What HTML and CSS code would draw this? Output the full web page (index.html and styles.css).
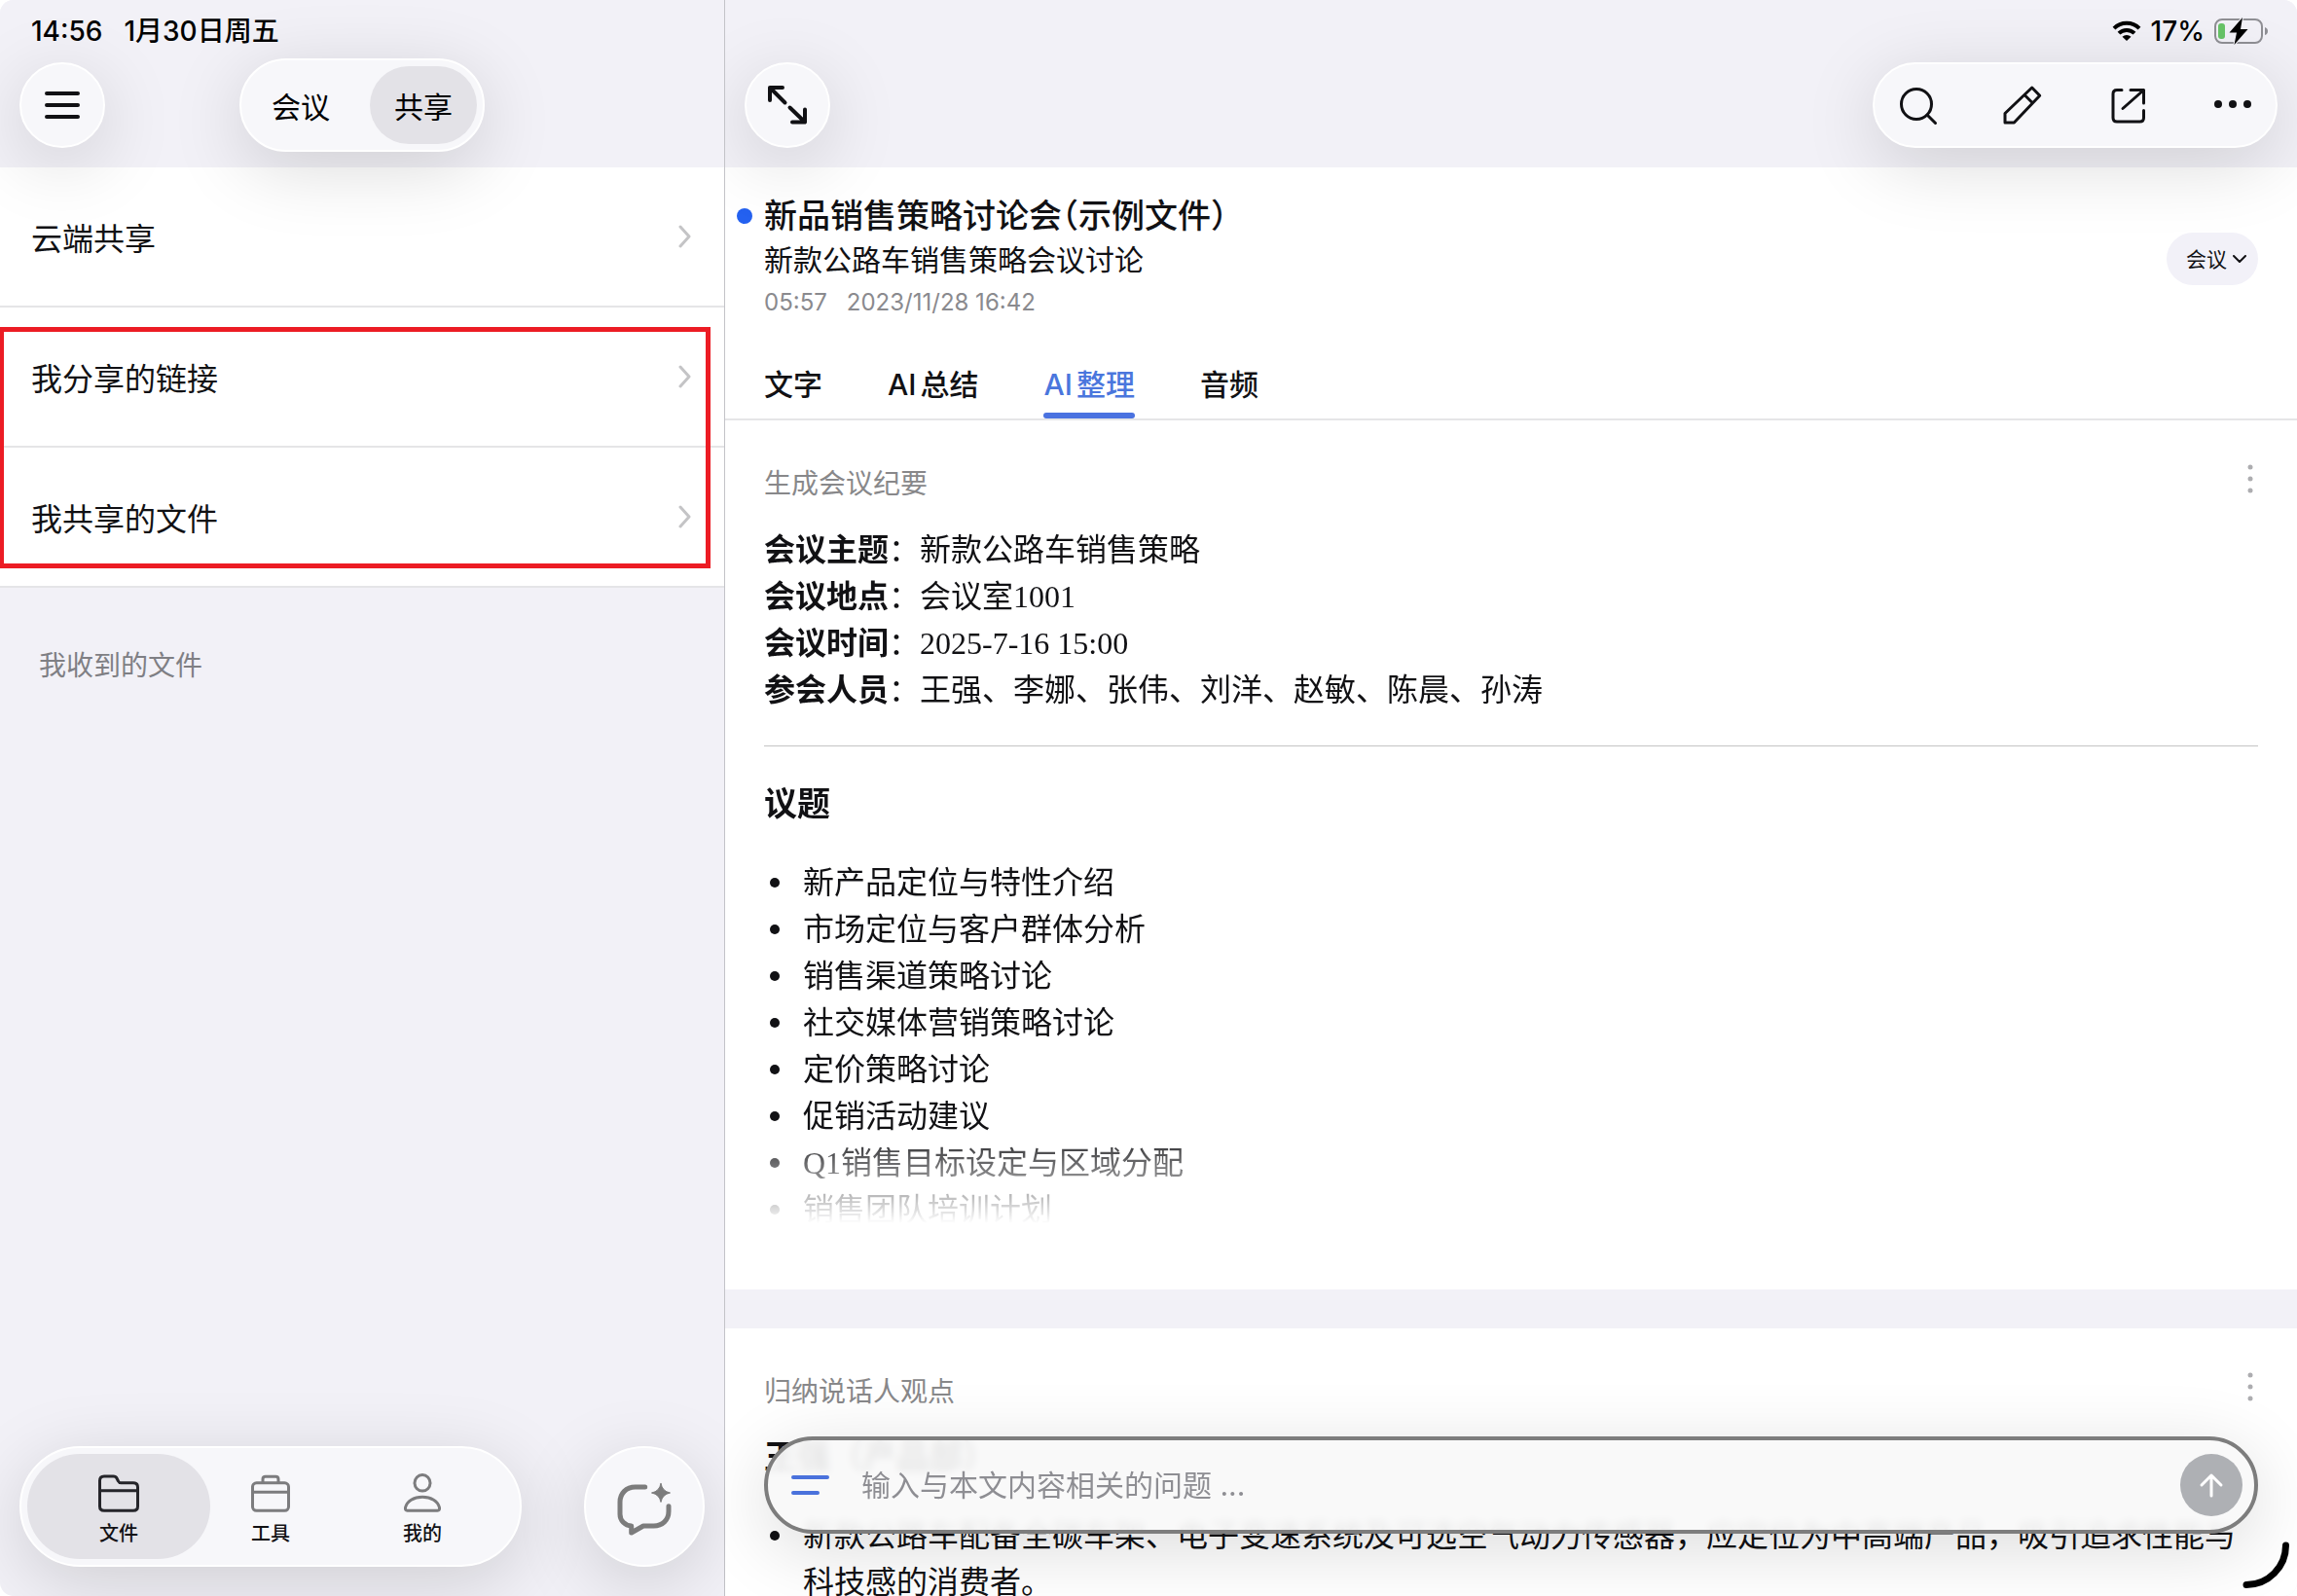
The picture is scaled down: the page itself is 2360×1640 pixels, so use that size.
FILE: index.html
```html
<!DOCTYPE html>
<html lang="zh-CN">
<head>
<meta charset="UTF-8">
<meta name="viewport" content="width=device-width, initial-scale=1.0">
<title>共享 - 新品销售策略讨论会</title>
<link rel="stylesheet" href="styles.css">
</head>
<body>
<div class="app">

  <!-- 左侧栏 -->
  <aside class="sidebar">
    <header class="topbar">
      <div class="status">
        <span>14:56</span>
        <span>1月30日周五</span>
      </div>
      <div class="topbar-row topbar-row-center">
        <button class="round-btn" aria-label="菜单">
          <svg class="icon" viewBox="0 0 44 44" stroke-width="4"><path d="M6 10h32M6 22h32M6 34h32"/></svg>
        </button>
        <div class="segmented glass">
          <button class="segment">会议</button>
          <button class="segment active">共享</button>
        </div>
      </div>
    </header>

    <nav class="share-list">
      <a class="share-row" href="#cloud">云端共享
        <svg class="chevron" viewBox="0 0 14 24"><path d="M2 2l9 10-9 10"/></svg>
      </a>
      <div class="share-group">
        <a class="share-row" href="#links">我分享的链接
          <svg class="chevron" viewBox="0 0 14 24"><path d="M2 2l9 10-9 10"/></svg>
        </a>
        <a class="share-row" href="#files">我共享的文件
          <svg class="chevron" viewBox="0 0 14 24"><path d="M2 2l9 10-9 10"/></svg>
        </a>
        <div class="highlight"></div>
      </div>
    </nav>

    <h2 class="received">我收到的文件</h2>

    <footer class="bottombar">
      <nav class="tabbar glass">
        <a class="tabbar-item active" href="#files">
          <svg class="tab-icon" viewBox="0 0 44 40"><path d="M2.500 34V7.500Q2.500 3 7 3h9.500q2.500 0 3.500 2l1.500 3q.8 1.800 3 1.800H37q4.500 0 4.500 4.500V34q0 4.300-4.500 4.300H7Q2.500 38.300 2.500 34zM2.500 17.700h39"/></svg>
          文件
        </a>
        <a class="tabbar-item" href="#tools">
          <svg class="tab-icon" viewBox="0 0 44 40"><rect x="3.500" y="9.800" width="37" height="28.500" rx="4"/><path d="M3.500 19.300h37M14 9.500V6q0-2.800 2.800-2.800h10.400Q30 3.200 30 6v3.500"/></svg>
          工具
        </a>
        <a class="tabbar-item" href="#mine">
          <svg class="tab-icon" viewBox="0 0 44 40"><ellipse cx="22" cy="9.800" rx="8" ry="8.300"/><path d="M6.500 38.200q-2.500 0-2-3C6 28.500 13 24.200 22 24.200s16 4.300 17.500 11q.5 3-2 3z"/></svg>
          我的
        </a>
      </nav>
      <button class="chat-btn glass" aria-label="AI 对话">
        <svg class="chat-icon" viewBox="0 0 64 64">
          <path d="M32.700 12H22.700C13.500 12 7 18.500 7 27.500V40c0 6.500 5 11.500 11.700 12v7l12.300-7h10.700C50.500 52 57 46 57 37v-5.300"/>
          <path class="star" d="M49 8.500q1.500 8 9.500 9.500-8 1.500-9.500 9.500-1.500-8-9.500-9.500 8-1.500 9.500-9.500z"/>
        </svg>
      </button>
    </footer>
  </aside>

  <!-- 右侧内容 -->
  <main class="main">
    <header class="topbar">
      <div class="status status-right">
        <svg class="wifi" viewBox="0 0 30 22">
          <path d="M2 8.200a18.500 18.500 0 0 1 26 0M7 13.200a11.400 11.400 0 0 1 16 0"/>
          <path class="solid" d="M15 21l4.500-4.300a6.500 6.500 0 0 0-9 0z"/>
        </svg>
        <span>17%</span>
        <svg class="battery" viewBox="0 0 56 28">
          <rect class="shell" x="1" y="2" width="48" height="24" rx="7"/>
          <rect class="level" x="4" y="6" width="7" height="16" rx="3"/>
          <path class="cap" d="M52 10q3 1 3 4t-3 4z"/>
          <path class="bolt" d="M29 0L15.500 15.500h7.500L20.500 28 34.500 12H27z"/>
        </svg>
      </div>
      <div class="topbar-row">
        <button class="round-btn" aria-label="全屏">
          <svg class="icon" viewBox="0 0 44 44" stroke-width="4"><path d="M17 4H4v13M4 4l15.500 15.500M27 39.500h13V26.500M40 39.500L24.500 24.500"/></svg>
        </button>
        <div class="toolbar glass">
          <button class="tool" aria-label="搜索">
            <svg class="icon" viewBox="0 0 44 44"><circle cx="21" cy="21" r="15.500"/><path d="M32 32l8.500 8.500"/></svg>
          </button>
          <button class="tool" aria-label="编辑">
            <svg class="icon" viewBox="0 0 44 44"><path d="M4 40v-9.500L31.700 4l8 8.300L13.300 40zM24 11.500l8 8"/></svg>
          </button>
          <button class="tool" aria-label="导出">
            <svg class="icon" viewBox="0 0 44 44"><path d="M16 6.500h-5q-4 0-4 4V35q0 4 4 4h23.500q4 0 4-4v-7.500M25 6.500h13.500V20M38.500 6.500L17 25.500"/></svg>
          </button>
          <button class="tool" aria-label="更多">
            <svg class="icon icon-dots" viewBox="0 0 44 44"><circle cx="7" cy="21" r="4"/><circle cx="22" cy="21" r="4"/><circle cx="37" cy="21" r="4"/></svg>
          </button>
        </div>
      </div>
    </header>

    <section class="doc-head">
      <div class="doc-info">
        <div class="doc-text">
          <h1 class="doc-title">新品销售策略讨论会（示例文件）</h1>
          <p class="doc-sub">新款公路车销售策略会议讨论</p>
          <p class="doc-meta"><span>05:57</span><span>2023/11/28 16:42</span></p>
        </div>
        <div class="type-picker">
          <select class="type-select" aria-label="类型">
            <option>会议</option>
          </select>
          <svg class="type-arrow" viewBox="0 0 14 8"><path d="M1 1l6 6 6-6"/></svg>
        </div>
      </div>
      <nav class="tabs">
        <a class="tab" href="#text">文字</a>
        <a class="tab" href="#summary"><span class="latin">AI</span>总结</a>
        <a class="tab active" href="#organize"><span class="latin">AI</span>整理</a>
        <a class="tab" href="#audio">音频</a>
      </nav>
    </section>

    <section class="card">
      <div class="card-head">
        <h2 class="card-title">生成会议纪要</h2>
        <button class="more" aria-label="更多操作">
          <svg class="more-icon" viewBox="0 0 16 32"><circle cx="8" cy="4" r="2.500"/><circle cx="8" cy="16" r="2.500"/><circle cx="8" cy="28" r="2.500"/></svg>
        </button>
      </div>
      <div class="article fade">
        <p><b>会议主题</b>：新款公路车销售策略</p>
        <p><b>会议地点</b>：会议室1001</p>
        <p><b>会议时间</b>：2025-7-16 15:00</p>
        <p><b>参会人员</b>：王强、李娜、张伟、刘洋、赵敏、陈晨、孙涛</p>
        <hr>
        <h3>议题</h3>
        <ul>
          <li>新产品定位与特性介绍</li>
          <li>市场定位与客户群体分析</li>
          <li>销售渠道策略讨论</li>
          <li>社交媒体营销策略讨论</li>
          <li>定价策略讨论</li>
          <li>促销活动建议</li>
          <li>Q1销售目标设定与区域分配</li>
          <li>销售团队培训计划</li>
        </ul>
      </div>
    </section>

    <section class="card">
      <div class="card-head">
        <h2 class="card-title">归纳说话人观点</h2>
        <button class="more" aria-label="更多操作">
          <svg class="more-icon" viewBox="0 0 16 32"><circle cx="8" cy="4" r="2.500"/><circle cx="8" cy="16" r="2.500"/><circle cx="8" cy="28" r="2.500"/></svg>
        </button>
      </div>
      <div class="article">
        <h3>王强（产品部）</h3>
        <ul>
          <li>新款公路车配备全碳车架、电子变速系统及可选空气动力传感器，应定位为中高端产品，吸引追求性能与科技感的消费者。</li>
        </ul>
      </div>
    </section>

    <!-- 悬浮提问框 -->
    <form class="ask">
      <svg class="ask-icon" viewBox="0 0 40 24"><path d="M2 4h35M2 20h25"/></svg>
      <input class="ask-input" type="text" placeholder="输入与本文内容相关的问题 ..." aria-label="提问">
      <button class="ask-send" type="button" aria-label="发送">
        <svg class="send-icon" viewBox="0 0 28 28"><path d="M14 25V4M4 14L14 4l10 10"/></svg>
      </button>
    </form>

    <svg class="corner" viewBox="0 0 48 48"><path d="M44.500 4A40.500 40.500 0 0 1 4 44.500"/></svg>
  </main>
</div>
</body>
</html>
```
FILE: styles.css
```css
* {
  box-sizing: border-box;
}
body {
  margin: 0;
  background: #fff;
  color: #111114;
  font-family: Inter, "Noto Sans CJK SC", sans-serif;
  font-size: 32px;
}
h1, h2, h3, p, ul {
  margin: 0;
}
a {
  color: inherit;
  text-decoration: none;
}
button, select, input {
  border: none;
  padding: 0;
  background: none;
  color: inherit;
  font-family: inherit;
}
svg {
  display: block;
  fill: none;
  stroke: currentColor;
  stroke-linecap: round;
  stroke-linejoin: round;
}

.app {
  display: grid;
  grid-template-columns: minmax(0, 745fr) minmax(0, 1615fr);
  height: 100vh;
  overflow: hidden;
  border-radius: 14px;
}
.glass, .round-btn {
  background: #f7f7fa;
  border: 2px solid #fff;
  box-shadow: 0 16px 76px rgba(0, 0, 0, 0.15);
}

/* 顶部栏 */
.topbar {
  position: relative;
  z-index: 1;
  background: #f2f1f7;
}
.status {
  display: flex;
  align-items: center;
  gap: 22px;
  height: 44px;
  padding: 20px 32px 0;
  color: #000;
  font-size: 28px;
  font-weight: 500;
  line-height: 24px;
}
.status-right {
  justify-content: flex-end;
  gap: 10px;
  padding-right: 29px;
}
.topbar-row {
  display: flex;
  align-items: center;
  justify-content: space-between;
  height: 128px;
  padding: 0 20px;
}
.topbar-row-center {
  display: grid;
  grid-template-columns: 1fr auto 1fr;
}
.round-btn {
  display: flex;
  align-items: center;
  justify-content: center;
  width: 88px;
  height: 88px;
  border-radius: 50%;
}
.icon {
  width: 44px;
  height: 44px;
  stroke-width: 3;
}
.round-btn .icon {
  stroke-width: 4;
}
.icon-dots {
  fill: currentColor;
  stroke: none;
}
.segmented {
  display: flex;
  gap: 16px;
  padding: 6px;
  border-radius: 48px;
}
.segment {
  width: 110px;
  height: 80px;
  border-radius: 40px;
  color: #000;
  font-size: 30px;
}
.segment.active {
  background: #e3e2e7;
}
.toolbar {
  display: flex;
  align-items: center;
  gap: 64px;
  height: 88px;
  padding: 0 22px;
  border-radius: 44px;
}
.wifi {
  width: 30px;
  height: 22px;
  color: #000;
  stroke-width: 4;
  stroke-linecap: butt;
}
.wifi .solid {
  fill: currentColor;
  stroke: none;
}
.battery {
  width: 56px;
  height: 28px;
}
.battery .shell {
  stroke: #8f8f94;
  stroke-width: 2;
}
.battery .level {
  fill: #67c467;
  stroke: none;
}
.battery .cap {
  fill: #8f8f94;
  stroke: none;
}
.battery .bolt {
  fill: #000;
  stroke: #f2f1f7;
  stroke-width: 2;
  paint-order: stroke;
}

/* 左侧栏 */
.sidebar {
  display: flex;
  flex-direction: column;
  border-right: 1px solid #c3c3c8;
  background: #f2f1f7;
}
.share-list {
  background: #fff;
}
.share-group {
  position: relative;
}
.share-row {
  display: flex;
  align-items: center;
  justify-content: space-between;
  height: 144px;
  padding: 0 33px 0 32px;
  border-bottom: 2px solid #e5e5e7;
}
.chevron {
  width: 14px;
  height: 24px;
  color: #c4c4c6;
  stroke-width: 3;
}
.highlight {
  position: absolute;
  inset: 20px 14px 20px 0;
  border: 5px solid #ec1c24;
  border-left-width: 4px;
  pointer-events: none;
}
.received {
  padding: 60px 40px;
  color: #7f7f84;
  font-size: 28px;
  font-weight: 400;
  line-height: 40px;
}
.bottombar {
  display: flex;
  align-items: center;
  justify-content: space-between;
  margin-top: auto;
  padding: 0 20px 30px;
}
.tabbar {
  display: flex;
  padding: 6px 22px;
  border-radius: 62px;
}
.tabbar-item {
  display: flex;
  flex-direction: column;
  align-items: center;
  gap: 8px;
  width: 156px;
  height: 108px;
  padding-top: 20px;
  border-radius: 54px;
  font-size: 20px;
  font-weight: 500;
  line-height: 28px;
}
.tabbar-item.active {
  width: 188px;
  margin: 0 -16px;
  background: #e3e2e7;
}
.tab-icon {
  width: 44px;
  height: 40px;
  color: #7c7c7e;
  stroke-width: 3;
}
.tabbar-item.active .tab-icon {
  color: #25252a;
}
.chat-btn {
  display: flex;
  align-items: center;
  justify-content: center;
  width: 124px;
  height: 124px;
  border-radius: 50%;
}
.chat-icon {
  width: 64px;
  height: 64px;
  color: #7c7c7c;
  stroke-width: 5;
}
.chat-icon .star {
  fill: currentColor;
  stroke-width: 1;
}

/* 文档标题 */
.main {
  position: relative;
  overflow: hidden;
  background: #f2f1f7;
}
.doc-head {
  padding: 26px 40px 0;
  border-bottom: 2px solid #e5e5e7;
  background: #fff;
}
.doc-info {
  display: flex;
  align-items: center;
  justify-content: space-between;
}
.doc-title {
  display: flex;
  align-items: center;
  gap: 12px;
  margin-left: -28px;
  font-size: 34px;
  font-weight: 500;
  line-height: 48px;
  font-feature-settings: "halt";
}
.doc-title::before {
  content: "";
  width: 16px;
  height: 16px;
  border-radius: 50%;
  background: #2461f0;
}
.doc-sub {
  font-size: 30px;
  line-height: 42px;
}
.doc-meta {
  display: flex;
  gap: 20px;
  color: #8a8a8e;
  font-size: 24px;
  line-height: 46px;
}
.type-picker {
  display: grid;
  align-items: center;
}
.type-select {
  grid-area: 1 / 1;
  width: 94px;
  height: 54px;
  padding-left: 20px;
  border-radius: 27px;
  background: #f2f1f8;
  font-size: 21px;
  appearance: none;
}
.type-arrow {
  grid-area: 1 / 1;
  justify-self: end;
  width: 14px;
  height: 8px;
  margin-right: 12px;
  stroke-width: 2;
  pointer-events: none;
}
.tabs {
  display: flex;
  gap: 67px;
  margin-top: 36px;
}
.tab {
  padding-bottom: 4px;
  font-size: 30px;
  font-weight: 500;
  line-height: 50px;
}
.tab .latin {
  margin-right: 4px;
}
.tab::after {
  content: "";
  display: block;
  height: 6px;
  margin-top: 4px;
  margin-bottom: -4px;
  border-radius: 3px;
}
.tab.active {
  color: #4a76dd;
}
.tab.active::after {
  background: #4a72e0;
}

/* 内容卡片 */
.card {
  margin-bottom: 40px;
  padding: 44px 40px 58px;
  background: #fff;
}
.card-head {
  display: flex;
  justify-content: space-between;
  margin-bottom: 23px;
}
.card-title {
  color: #88888a;
  font-size: 28px;
  font-weight: 400;
  line-height: 42px;
}
.more {
  height: 32px;
}
.more-icon {
  width: 16px;
  height: 32px;
  fill: #adadb0;
  stroke: none;
}
.article {
  font-family: "Liberation Serif", "Noto Sans CJK SC", serif;
  line-height: 48px;
}
.article hr {
  height: 1px;
  margin: 33px 0 36px;
  border: none;
  background: #c4c4c4;
}
.article h3 {
  margin-bottom: 32px;
  font-size: 34px;
  font-weight: 700;
}
.article ul {
  padding-left: 6px;
  list-style: none;
}
.article li {
  display: flex;
  gap: 24px;
}
.article li::before {
  content: "";
  flex: none;
  width: 10px;
  height: 10px;
  margin-top: 19px;
  border-radius: 50%;
  background: #111114;
}
.fade {
  -webkit-mask-image: linear-gradient(to top, transparent 10px, #000 108px);
  mask-image: linear-gradient(to top, transparent 10px, #000 108px);
}

/* 悬浮提问框 */
.ask {
  position: absolute;
  right: 40px;
  bottom: 64px;
  left: 40px;
  display: flex;
  align-items: center;
  height: 100px;
  padding: 0 12px 0 24px;
  border: 4px solid #7d7d7d;
  border-radius: 50px;
  background: rgba(248, 248, 248, 0.92);
  box-shadow: 0 16px 76px rgba(0, 0, 0, 0.14);
  backdrop-filter: blur(4px);
}
.ask-icon {
  width: 40px;
  height: 24px;
  color: #4a72dc;
  stroke-width: 4;
}
.ask-input {
  flex: 1;
  min-width: 0;
  height: 64px;
  padding-left: 32px;
  font-size: 30px;
  outline: none;
}
.ask-input::placeholder {
  color: #8e8e93;
}
.ask-send {
  display: flex;
  align-items: center;
  justify-content: center;
  width: 64px;
  height: 64px;
  border-radius: 50%;
  background: #aeb0b4;
  color: #fff;
}
.send-icon {
  width: 28px;
  height: 28px;
  stroke-width: 3;
}
.corner {
  position: absolute;
  right: 8px;
  bottom: 8px;
  width: 48px;
  height: 48px;
  color: #000;
  stroke-width: 7;
}
```
